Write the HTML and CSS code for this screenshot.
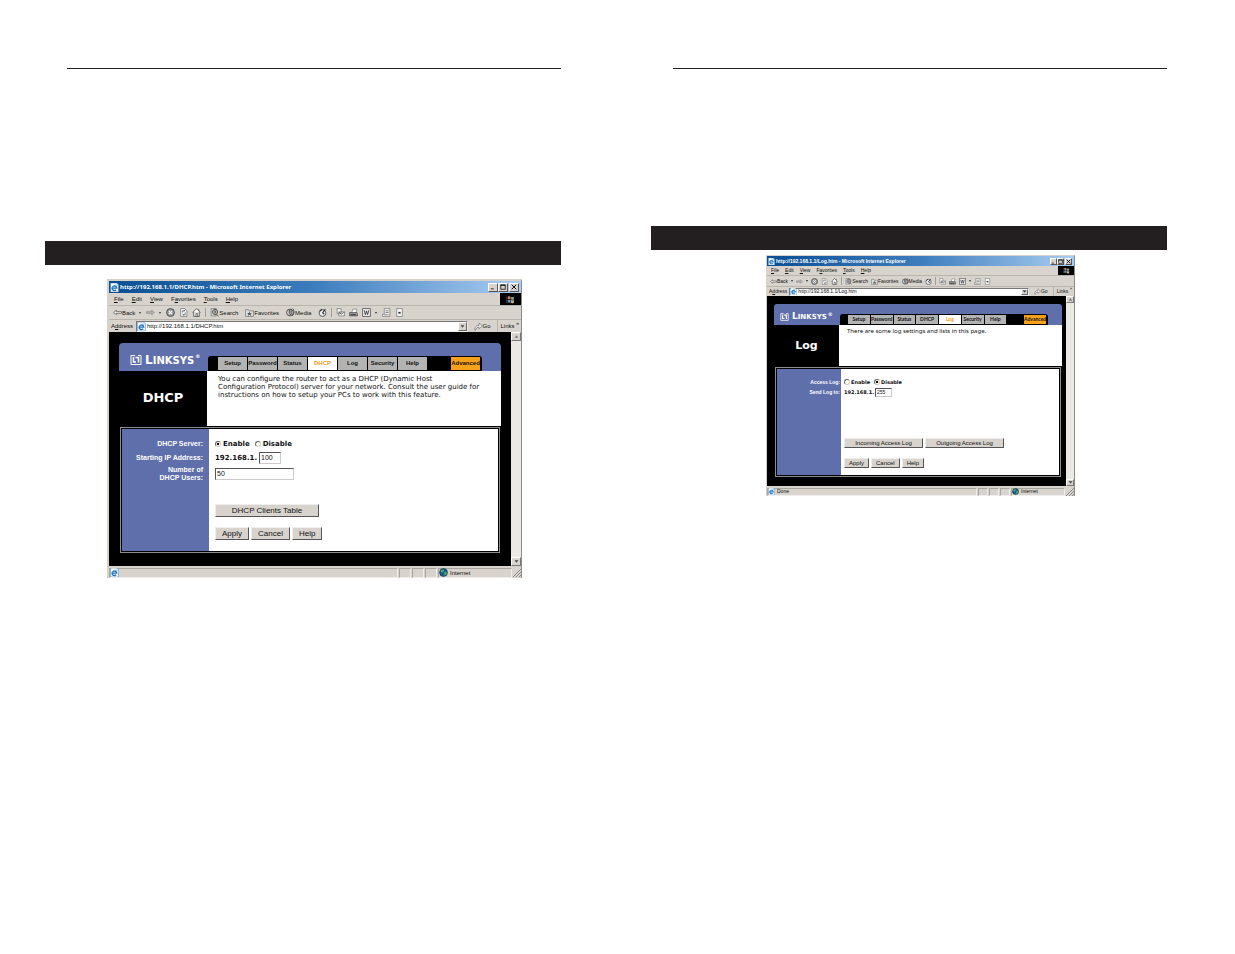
FILE: index.html
```
<!DOCTYPE html>
<html lang="en">
<head>
    <meta charset="UTF-8">
    <meta name="viewport" content="width=device-width, initial-scale=1.0">
    <title>Router Setup Guide</title>
    <link rel="stylesheet" href="styles.css">
</head>
<body>
    <!-- Shared icons -->
    <svg class="icon-defs" aria-hidden="true">
        <symbol id="i-ie" viewBox="0 0 16 16">
            <path d="M1 0h11l3 3v13H1z" fill="#fff" stroke="#4c82b8"/>
            <path d="M4 9h8a4 4 0 1 0-1 3" fill="none" stroke="#1b74c4" stroke-width="2.4"/>
            <path d="M2 12C4 5 9 3 14 4" fill="none" stroke="#4aa3e0" stroke-width="1.2"/>
        </symbol>
        <symbol id="i-back" viewBox="0 0 16 16">
            <path d="M1 8l5-4v2.500h9v3H6V12z" fill="#eee" stroke="#333"/>
        </symbol>
        <symbol id="i-forward" viewBox="0 0 16 16">
            <path d="M15 8l-5-4v2.500H1v3h9V12z" fill="#bbb" stroke="#777"/>
        </symbol>
        <symbol id="i-stop" viewBox="0 0 16 16">
            <circle cx="8" cy="8" r="7" fill="#999" stroke="#444" stroke-width="1.500"/>
            <path d="M5 5l6 6M11 5l-6 6" stroke="#fff" stroke-width="2"/>
        </symbol>
        <symbol id="i-refresh" viewBox="0 0 16 16">
            <path d="M3 1h7l4 4v10H3z" fill="#f5f5f5" stroke="#555"/>
            <path d="M6 8V5h4M8.500 3.500L10 5 8.500 6.500M11 8v4H7M8.500 10.500L7 12l1.500 1.500" fill="none" stroke="#333"/>
        </symbol>
        <symbol id="i-home" viewBox="0 0 16 16">
            <path d="M1 8l7-7 7 7M3 7v8h10V7" fill="#f5f5f5" stroke="#444" stroke-width="1.300"/>
            <path d="M7 15v-5h3v5M12 5V2" fill="none" stroke="#444" stroke-width="1.300"/>
        </symbol>
        <symbol id="i-search" viewBox="0 0 16 16">
            <path d="M2 1h9v13H2z" fill="#ddd" stroke="#555"/>
            <circle cx="9" cy="7" r="4.500" fill="#eee" stroke="#333" stroke-width="1.500"/>
            <path d="M6 7h6M9 3v8M12 11l3 4" stroke="#444" stroke-width="1.400"/>
        </symbol>
        <symbol id="i-favorites" viewBox="0 0 16 16">
            <path d="M1 3h5l1 2h8v10H1z" fill="#ddd" stroke="#555"/>
            <path d="M8 6l1 3h3l-2 2 1 3-3-2-3 2 1-3-2-2h3z" fill="#555"/>
        </symbol>
        <symbol id="i-media" viewBox="0 0 16 16">
            <circle cx="7" cy="8" r="6" fill="#ccc" stroke="#444" stroke-width="1.500"/>
            <path d="M6 3v7M9 2v9l-3 2M12 1c3 4 3 9-1 13" fill="none" stroke="#333" stroke-width="1.500"/>
        </symbol>
        <symbol id="i-history" viewBox="0 0 16 16">
            <circle cx="8" cy="9" r="6" fill="#eee" stroke="#444" stroke-width="1.500"/>
            <path d="M8 9l5-7M8 9l3 2M3 6l4-4" stroke="#333" stroke-width="2"/>
        </symbol>
        <symbol id="i-mail" viewBox="0 0 16 16">
            <path d="M2 1h7v9H2zM5 7h10v7H5z" fill="#f5f5f5" stroke="#555"/>
            <path d="M5 7l5 4 5-4" fill="none" stroke="#333"/>
        </symbol>
        <symbol id="i-print" viewBox="0 0 16 16">
            <path d="M5 8l2-6h7l-2 6" fill="#fff" stroke="#666"/>
            <path d="M1 8h13l1 2v4H1z" fill="#999" stroke="#333"/>
            <path d="M3 12h9" stroke="#222" stroke-width="1.500"/>
        </symbol>
        <symbol id="i-word" viewBox="0 0 16 16">
            <path d="M1 1h14v14H1z" fill="#eee" stroke="#555" stroke-width="1.500"/>
            <path d="M4 4l2 8 2-7 2 7 2-8" fill="none" stroke="#333" stroke-width="1.500"/>
        </symbol>
        <symbol id="i-page" viewBox="0 0 16 16">
            <path d="M4 1h10v14H1v-4h3z" fill="#f5f5f5" stroke="#555"/>
            <path d="M6 5h6M6 8h6M4 12h8" stroke="#333"/>
        </symbol>
        <symbol id="i-note" viewBox="0 0 16 16">
            <path d="M3 1h10v14H3z" fill="#f5f5f5" stroke="#555"/>
            <path d="M6 7h4v3H6z" fill="#333"/>
        </symbol>
        <symbol id="i-go" viewBox="0 0 16 16">
            <path d="M2 15c-2-5 2-9 7-9V2l6 5-6 5V9c-3 0-5 2-7 6z" fill="#eee" stroke="#555"/>
        </symbol>
        <symbol id="i-flag" viewBox="0 0 16 16">
            <path d="M3 3c2-1 3-1 5 0v5c-2-1-3-1-5 0z" fill="#c87e68"/>
            <path d="M9 3c2 1 3 1 5 0v5c-2 1-3 1-5 0z" fill="#7fa08a"/>
            <path d="M3 9c2-1 3-1 5 0v5c-2-1-3-1-5 0z" fill="#6d93c8"/>
            <path d="M9 9c2 1 3 1 5 0v5c-2 1-3 1-5 0z" fill="#c8b870"/>
            <path d="M0 4h2M0 7h2M0 10h2M0 13h2" stroke="#8a8a9a"/>
        </symbol>
        <symbol id="i-globe" viewBox="0 0 16 16">
            <circle cx="8" cy="8" r="7" fill="#1c5c8a" stroke="#123"/>
            <path d="M3 4l5-2 1 3-3 3-3-1zM9 8l4-2 1 4-4 4z" fill="#3fae6a"/>
        </symbol>
        <symbol id="i-min" viewBox="0 0 8 8"><path d="M1 6h4v1H1z"/></symbol>
        <symbol id="i-max" viewBox="0 0 8 8"><path d="M1 1h6v6H1zM1 2h6" fill="none" stroke="#000"/></symbol>
        <symbol id="i-close" viewBox="0 0 8 8"><path d="M1 1l6 6M7 1L1 7" stroke="#000" stroke-width="1.300"/></symbol>
        <symbol id="i-up" viewBox="0 0 8 8"><path d="M1 6l3-4 3 4z" fill="#777"/></symbol>
        <symbol id="i-down" viewBox="0 0 8 8"><path d="M1 2h6L4 6z" fill="#444"/></symbol>
        <symbol id="i-grip" viewBox="0 0 8 8"><path d="M0 8l8-8M3 8l5-5M6 8l2-2" stroke="#888"/></symbol>
        <symbol id="i-linksys" viewBox="0 0 24 20">
            <path d="M10 1H2v18h20V1h-6" fill="none" stroke="#fff" stroke-width="2"/>
            <path d="M7 4v10h5M11 5h6v10" fill="none" stroke="#fff" stroke-width="3"/>
        </symbol>
    </svg>

    <main class="spread">
        <!-- DHCP page -->
        <section class="sheet">
            <hr class="rule">
            <div class="heading-bar"></div>
            <div class="window">
                <div class="title-bar">
                    <svg class="icon"><use href="#i-ie"/></svg>
                    <span class="title-text">http://192.168.1.1/DHCP.htm - Microsoft Internet Explorer</span>
                    <button class="win-btn" aria-label="Minimize"><svg><use href="#i-min"/></svg></button>
                    <button class="win-btn" aria-label="Maximize"><svg><use href="#i-max"/></svg></button>
                    <button class="win-btn close" aria-label="Close"><svg><use href="#i-close"/></svg></button>
                </div>
                <div class="menu-bar">
                    <button><u>F</u>ile</button>
                    <button><u>E</u>dit</button>
                    <button><u>V</u>iew</button>
                    <button>F<u>a</u>vorites</button>
                    <button><u>T</u>ools</button>
                    <button><u>H</u>elp</button>
                    <span class="throbber"><svg class="icon"><use href="#i-flag"/></svg></span>
                </div>
                <div class="tool-bar">
                    <button><svg class="icon"><use href="#i-back"/></svg>Back</button>
                    <span class="caret"></span>
                    <button aria-label="Forward"><svg class="icon"><use href="#i-forward"/></svg></button>
                    <span class="caret"></span>
                    <button aria-label="Stop"><svg class="icon"><use href="#i-stop"/></svg></button>
                    <button aria-label="Refresh"><svg class="icon"><use href="#i-refresh"/></svg></button>
                    <button aria-label="Home"><svg class="icon"><use href="#i-home"/></svg></button>
                    <span class="divider"></span>
                    <button class="labelled"><svg class="icon"><use href="#i-search"/></svg>Search</button>
                    <button class="labelled"><svg class="icon"><use href="#i-favorites"/></svg>Favorites</button>
                    <button class="labelled"><svg class="icon"><use href="#i-media"/></svg>Media</button>
                    <button aria-label="History"><svg class="icon"><use href="#i-history"/></svg></button>
                    <span class="divider"></span>
                    <button aria-label="Mail"><svg class="icon"><use href="#i-mail"/></svg></button>
                    <button aria-label="Print"><svg class="icon"><use href="#i-print"/></svg></button>
                    <button aria-label="Edit"><svg class="icon"><use href="#i-word"/></svg></button>
                    <span class="caret"></span>
                    <button aria-label="Discuss"><svg class="icon"><use href="#i-page"/></svg></button>
                    <button aria-label="Messenger"><svg class="icon"><use href="#i-note"/></svg></button>
                </div>
                <div class="address-bar">
                    <label for="address-dhcp">A<u>d</u>dress</label>
                    <div class="address-box">
                        <svg class="icon"><use href="#i-ie"/></svg>
                        <input type="text" id="address-dhcp" value="http://192.168.1.1/DHCP.htm">
                        <button class="drop" aria-label="Show addresses"><svg><use href="#i-down"/></svg></button>
                    </div>
                    <button class="go"><svg class="icon"><use href="#i-go"/></svg>Go</button>
                    <span class="links">Links <sup>»</sup></span>
                </div>
                <div class="view">
                    <div class="router">
                        <header class="banner">
                            <div class="logo"><svg><use href="#i-linksys"/></svg><span><b>L</b>INKSYS</span><sup>®</sup></div>
                            <nav class="tabs">
                                <a href="#">Setup</a>
                                <a href="#">Password</a>
                                <a href="#">Status</a>
                                <a href="#" class="current">DHCP</a>
                                <a href="#">Log</a>
                                <a href="#">Security</a>
                                <a href="#">Help</a>
                                <a href="#" class="advanced">Advanced</a>
                            </nav>
                        </header>
                        <div class="intro">
                            <h1>DHCP</h1>
                            <p>You can configure the router to act as a DHCP (Dynamic Host<br>Configuration Protocol) server for your network. Consult the user guide for<br>instructions on how to setup your PCs to work with this feature.</p>
                        </div>
                        <form class="settings">
                            <span class="name">DHCP Server:</span>
                            <div class="value">
                                <input type="radio" name="dhcp" id="dhcp-on" checked><label for="dhcp-on">Enable</label>
                                <input type="radio" name="dhcp" id="dhcp-off"><label for="dhcp-off">Disable</label>
                            </div>
                            <label class="name" for="start-ip">Starting IP Address:</label>
                            <div class="value">192.168.1.<input type="text" class="octet" id="start-ip" value="100"></div>
                            <label class="name" for="users">Number of<br>DHCP Users:</label>
                            <div class="value"><input type="text" class="wide" id="users" value="50"></div>
                            <div class="actions">
                                <div class="row">
                                    <button type="button" class="long">DHCP Clients Table</button>
                                </div>
                                <div class="row">
                                    <button type="button">Apply</button>
                                    <button type="button">Cancel</button>
                                    <button type="button">Help</button>
                                </div>
                            </div>
                        </form>
                    </div>
                    <div class="scrollbar">
                        <button aria-label="Scroll up"><svg><use href="#i-up"/></svg></button>
                        <button aria-label="Scroll down"><svg><use href="#i-down"/></svg></button>
                    </div>
                </div>
                <div class="status-bar">
                    <span class="pane message"><svg class="icon"><use href="#i-ie"/></svg></span>
                    <span class="pane"></span>
                    <span class="pane"></span>
                    <span class="pane"></span>
                    <span class="pane zone"><svg class="icon"><use href="#i-globe"/></svg>Internet</span>
                    <svg class="grip"><use href="#i-grip"/></svg>
                </div>
            </div>
        </section>

        <!-- Log page -->
        <section class="sheet log">
            <hr class="rule">
            <div class="heading-bar"></div>
            <div class="window small">
                <div class="title-bar">
                    <svg class="icon"><use href="#i-ie"/></svg>
                    <span class="title-text">http://192.168.1.1/Log.htm - Microsoft Internet Explorer</span>
                    <button class="win-btn" aria-label="Minimize"><svg><use href="#i-min"/></svg></button>
                    <button class="win-btn" aria-label="Maximize"><svg><use href="#i-max"/></svg></button>
                    <button class="win-btn close" aria-label="Close"><svg><use href="#i-close"/></svg></button>
                </div>
                <div class="menu-bar">
                    <button><u>F</u>ile</button>
                    <button><u>E</u>dit</button>
                    <button><u>V</u>iew</button>
                    <button>F<u>a</u>vorites</button>
                    <button><u>T</u>ools</button>
                    <button><u>H</u>elp</button>
                    <span class="throbber"><svg class="icon"><use href="#i-flag"/></svg></span>
                </div>
                <div class="tool-bar">
                    <button><svg class="icon"><use href="#i-back"/></svg>Back</button>
                    <span class="caret"></span>
                    <button aria-label="Forward"><svg class="icon"><use href="#i-forward"/></svg></button>
                    <span class="caret"></span>
                    <button aria-label="Stop"><svg class="icon"><use href="#i-stop"/></svg></button>
                    <button aria-label="Refresh"><svg class="icon"><use href="#i-refresh"/></svg></button>
                    <button aria-label="Home"><svg class="icon"><use href="#i-home"/></svg></button>
                    <span class="divider"></span>
                    <button class="labelled"><svg class="icon"><use href="#i-search"/></svg>Search</button>
                    <button class="labelled"><svg class="icon"><use href="#i-favorites"/></svg>Favorites</button>
                    <button class="labelled"><svg class="icon"><use href="#i-media"/></svg>Media</button>
                    <button aria-label="History"><svg class="icon"><use href="#i-history"/></svg></button>
                    <span class="divider"></span>
                    <button aria-label="Mail"><svg class="icon"><use href="#i-mail"/></svg></button>
                    <button aria-label="Print"><svg class="icon"><use href="#i-print"/></svg></button>
                    <button aria-label="Edit"><svg class="icon"><use href="#i-word"/></svg></button>
                    <span class="caret"></span>
                    <button aria-label="Discuss"><svg class="icon"><use href="#i-page"/></svg></button>
                    <button aria-label="Messenger"><svg class="icon"><use href="#i-note"/></svg></button>
                </div>
                <div class="address-bar">
                    <label for="address-log">A<u>d</u>dress</label>
                    <div class="address-box">
                        <svg class="icon"><use href="#i-ie"/></svg>
                        <input type="text" id="address-log" value="http://192.168.1.1/Log.htm">
                        <button class="drop" aria-label="Show addresses"><svg><use href="#i-down"/></svg></button>
                    </div>
                    <button class="go"><svg class="icon"><use href="#i-go"/></svg>Go</button>
                    <span class="links">Links <sup>»</sup></span>
                </div>
                <div class="view">
                    <div class="router">
                        <header class="banner">
                            <div class="logo"><svg><use href="#i-linksys"/></svg><span><b>L</b>INKSYS</span><sup>®</sup></div>
                            <nav class="tabs">
                                <a href="#">Setup</a>
                                <a href="#">Password</a>
                                <a href="#">Status</a>
                                <a href="#">DHCP</a>
                                <a href="#" class="current">Log</a>
                                <a href="#">Security</a>
                                <a href="#">Help</a>
                                <a href="#" class="advanced">Advanced</a>
                            </nav>
                        </header>
                        <div class="intro">
                            <h1>Log</h1>
                            <p>There are some log settings and lists in this page.</p>
                        </div>
                        <form class="settings">
                            <span class="name">Access Log:</span>
                            <div class="value">
                                <input type="radio" name="log" id="log-on"><label for="log-on">Enable</label>
                                <input type="radio" name="log" id="log-off" checked><label for="log-off">Disable</label>
                            </div>
                            <label class="name" for="send-log">Send Log to:</label>
                            <div class="value">192.168.1.<input type="text" class="octet" id="send-log" value="255"></div>
                            <div class="actions">
                                <div class="row">
                                    <button type="button" class="long">Incoming Access Log</button>
                                    <button type="button" class="long">Outgoing Access Log</button>
                                </div>
                                <div class="row">
                                    <button type="button">Apply</button>
                                    <button type="button">Cancel</button>
                                    <button type="button">Help</button>
                                </div>
                            </div>
                        </form>
                    </div>
                    <div class="scrollbar">
                        <button aria-label="Scroll up"><svg><use href="#i-up"/></svg></button>
                        <button aria-label="Scroll down"><svg><use href="#i-down"/></svg></button>
                    </div>
                </div>
                <div class="status-bar">
                    <span class="pane message"><svg class="icon"><use href="#i-ie"/></svg>Done</span>
                    <span class="pane"></span>
                    <span class="pane"></span>
                    <span class="pane"></span>
                    <span class="pane zone"><svg class="icon"><use href="#i-globe"/></svg>Internet</span>
                    <svg class="grip"><use href="#i-grip"/></svg>
                </div>
            </div>
        </section>
    </main>
</body>
</html>
```

FILE: styles.css
```
* {
    box-sizing: border-box;
}

body {
    margin: 0;
    background-color: #fff;
    color: #111;
    font-family: "Liberation Sans", Arial, sans-serif;
}

button,
input {
    margin: 0;
    padding: 0;
    border: none;
    border-radius: 0;
    background: none;
    color: inherit;
    font: inherit;
}

svg {
    display: block;
    flex: none;
}

.icon-defs {
    position: absolute;
    width: 0;
    height: 0;
}

/* Printed spread */
.spread {
    display: grid;
    grid-template-columns: 1fr 1fr;
    gap: 90px;
    padding: 68px 68px 0 45px;
}

.rule {
    height: 1px;
    margin: 0 0 172px 22px;
    border: none;
    background-color: #231f20;
}

.log .rule {
    margin-bottom: 157px;
}

.heading-bar {
    height: 24px;
    background-color: #231f20;
}

/* Browser window */
.window {
    --icon: 9px;
    --row: 12px;
    margin: 14px 39px 0 62px;
    border: 2px solid #d6d2ca;
    border-right-color: #8c8a86;
    border-right-width: 1px;
    border-bottom: none;
    background-color: #d8d4cd;
    font-size: 6px;
    line-height: var(--row);
}

.window.small {
    --icon: 7px;
    --row: 9px;
    margin: 5px 92px 0 115px;
    border-width: 1px;
    border-bottom: none;
    font-size: 5px;
}

.icon {
    width: var(--icon);
    height: var(--icon);
}

.title-bar {
    display: flex;
    align-items: center;
    height: 12px;
    padding: 0 2px 0 1px;
    background-image: linear-gradient(to right, #0a4f94, #3d7dbd 50%, #a9cdf2);
    color: #fff;
    font-weight: bold;
}

.small .title-bar {
    height: 10px;
}

.title-text {
    flex: 1;
    padding-left: 1px;
    font-family: "Noto Sans", sans-serif;
    white-space: nowrap;
}

.small .title-text {
    font-family: "Liberation Sans", Arial, sans-serif;
}

.win-btn {
    display: flex;
    align-items: center;
    justify-content: center;
    width: 10px;
    height: 9px;
    border: 1px solid;
    border-color: #fff #555 #555 #fff;
    background-color: #d8d4cd;
}

.win-btn.close {
    margin-left: 1px;
}

.win-btn svg {
    width: 6px;
    height: 6px;
}

.small .win-btn {
    width: 7px;
    height: 7px;
}

.small .win-btn svg {
    width: 5px;
    height: 5px;
}

.menu-bar {
    display: flex;
    gap: 8px;
    height: 12px;
    padding-left: 5px;
}

.small .menu-bar {
    gap: 6px;
    height: 9px;
    padding-left: 4px;
}

.throbber {
    display: flex;
    align-items: center;
    justify-content: center;
    width: 21px;
    margin-left: auto;
    background-color: #000;
}

.small .throbber {
    width: 16px;
}

.tool-bar {
    display: flex;
    align-items: center;
    gap: 4px;
    height: 14px;
    padding-left: 4px;
    border-top: 1px solid #b8b4ae;
}

.small .tool-bar {
    gap: 3px;
    height: 11px;
    padding-left: 3px;
}

.tool-bar button,
.go {
    display: flex;
    align-items: center;
}

.labelled {
    margin-right: 3px;
}

.small .labelled {
    margin-right: 0;
}

.caret {
    margin: 0 1px 0 0;
    border: 1px solid transparent;
    border-top: 2px solid #333;
    border-bottom: none;
}

.small .caret {
    margin: 0;
}

.divider {
    width: 1px;
    height: 75%;
    background-color: #a09c96;
}

.address-bar {
    display: flex;
    align-items: center;
    gap: 3px;
    height: 13px;
    padding: 0 2px;
    border-top: 1px solid #b8b4ae;
}

.small .address-bar {
    gap: 2px;
    height: 10px;
}

.address-box {
    display: flex;
    flex: 1;
    align-items: center;
    height: 11px;
    border: 1px solid;
    border-color: #777 #eee #eee #777;
    background-color: #fff;
}

.small .address-box {
    height: 8px;
}

.address-box input {
    flex: 1;
    min-width: 0;
    padding-left: 1px;
}

.drop {
    display: flex;
    align-items: center;
    justify-content: center;
    width: 9px;
    height: 100%;
    border: 1px solid;
    border-color: #fff #666 #666 #fff;
    background-color: #d8d4cd;
}

.small .drop {
    width: 7px;
}

.drop svg {
    width: 5px;
    height: 5px;
}

.go {
    margin-left: 3px;
}

.links {
    margin-left: 3px;
    padding-left: 3px;
    border-left: 1px solid #b8b4ae;
    white-space: nowrap;
}

.links sup {
    line-height: 1px;
}

/* Page area with scrollbar */
.view {
    display: flex;
    background-color: #000;
}

.router {
    flex: 1;
    padding: 11px 10px 12px;
}

.small .router {
    padding: 8px 4px 8px 7px;
}

.scrollbar {
    display: flex;
    flex-direction: column;
    justify-content: space-between;
    width: 10px;
    background-color: #ebe9e4;
}

.small .scrollbar {
    width: 8px;
}

.scrollbar button {
    display: flex;
    align-items: center;
    justify-content: center;
    height: 9px;
    border: 1px solid;
    border-color: #fff #777 #777 #fff;
    background-color: #d8d4cd;
}

.small .scrollbar button {
    height: 7px;
}

.scrollbar svg {
    width: 5px;
    height: 5px;
}

/* Router banner */
.banner {
    display: flex;
    align-items: flex-end;
    height: 28px;
    padding-right: 19px;
    border-radius: 4px 4px 0 0;
    background-color: #5f6fac;
}

.small .banner {
    height: 21px;
    padding-right: 14px;
    border-radius: 3px 3px 0 0;
}

.logo {
    display: flex;
    align-items: center;
    gap: 3px;
    width: 89px;
    height: 22px;
    padding-left: 11px;
    color: #fff;
    font-family: "DejaVu Sans", Verdana, sans-serif;
    font-size: 10px;
    font-weight: bold;
}

.logo b {
    font-size: 12px;
}

.logo svg {
    width: 12px;
    height: 10px;
}

.logo sup {
    align-self: flex-start;
    margin: 4px 0 0 -2px;
    font-size: 5px;
    line-height: 6px;
}

.small .logo {
    width: 66px;
    height: 16px;
    padding-left: 6px;
    font-size: 7px;
}

.small .logo b {
    font-size: 9px;
}

.small .logo svg {
    width: 9px;
    height: 8px;
}

.small .logo sup {
    margin-top: 2px;
}

.tabs {
    display: flex;
    flex: 1;
    gap: 1px;
    height: 15px;
    padding: 1px 2px 1px 10px;
    border-radius: 3px 3px 0 0;
    background-color: #000;
}

.small .tabs {
    height: 11px;
    padding: 1px 2px 1px 8px;
}

.tabs a {
    display: flex;
    flex: 1;
    justify-content: center;
    min-width: 0;
    background-color: #b3b3b3;
    color: #111;
    font-weight: bold;
    line-height: 13px;
    text-decoration: none;
}

.small .tabs a {
    font-family: Lato, sans-serif;
    line-height: 9px;
}

.tabs a.current {
    background-color: #fff;
    color: #f29a1a;
}

.tabs a.advanced {
    margin-left: 23px;
    background-color: #f7a11a;
}

.small .tabs a.advanced {
    margin-left: 17px;
}

.intro {
    display: flex;
    height: 55px;
    background-color: #fff;
}

.intro h1 {
    width: 88px;
    margin: 0;
    background-color: #000;
    color: #fff;
    font-family: "DejaVu Sans", Verdana, sans-serif;
    font-size: 13px;
    line-height: 54px;
    text-align: center;
}

.intro p {
    margin: 0;
    padding: 4px 0 0 11px;
    font-family: "DejaVu Sans", Verdana, sans-serif;
    font-size: 7px;
    line-height: 8px;
    white-space: nowrap;
}

.small .intro {
    height: 41px;
}

.small .intro h1 {
    width: 65px;
    font-size: 11px;
    line-height: 41px;
}

.small .intro p {
    padding: 2px 0 0 8px;
    font-family: "Noto Sans", sans-serif;
    font-size: 6px;
}

/* Settings form */
.settings {
    display: grid;
    grid-template-columns: 86px 1fr;
    grid-template-rows: 14px 14px 18px 1fr;
    column-gap: 7px;
    height: 128px;
    padding-top: 8px;
    border: 3px solid #000;
    outline: 1px solid #8c8c8c;
    outline-offset: -2px;
    background: linear-gradient(to right, #5f6fac 87px, #fff 87px) padding-box;
    font-family: "DejaVu Sans", Verdana, sans-serif;
    font-size: 7px;
    font-weight: bold;
}

.small .settings {
    grid-template-columns: 64px 1fr;
    grid-template-rows: 10px 10px 1fr;
    column-gap: 3px;
    height: 112px;
    background: linear-gradient(to right, #5f6fac 64px, #fff 64px) padding-box;
    font-size: 5px;
}

.name {
    padding-right: 5px;
    color: #fff;
    font-family: "Liberation Sans", Arial, sans-serif;
    line-height: 14px;
    text-align: right;
}

.name:has(br) {
    padding-top: 1px;
    line-height: 8px;
}

.small .name {
    padding-right: 1px;
    line-height: 10px;
}

.value {
    display: flex;
    align-items: center;
    gap: 2px;
}

.small .value {
    gap: 1px;
}

.value label + input {
    margin-left: 3px;
}

input[type="radio"] {
    appearance: none;
    width: 6px;
    height: 6px;
    border: 1px solid;
    border-color: #666 #ccc #ccc #666;
    border-radius: 50%;
    background-color: #fff;
}

input[type="radio"]:checked {
    background-image: radial-gradient(#000 30%, transparent 40%);
}

.value input[type="text"] {
    height: 12px;
    padding-left: 1px;
    border: 1px solid;
    border-color: #555 #ccc #ccc #555;
    background-color: #fff;
    font-family: "Liberation Sans", Arial, sans-serif;
    font-weight: normal;
}

.value .octet {
    width: 22px;
}

.value .wide {
    width: 79px;
}

.small .value input[type="text"] {
    height: 9px;
}

.small .value .octet {
    width: 17px;
}

.actions {
    display: flex;
    grid-column: 2;
    flex-direction: column;
    justify-content: flex-end;
    gap: 10px;
    padding-bottom: 11px;
}

.small .actions {
    padding-bottom: 7px;
}

.row {
    display: flex;
    gap: 2px;
}

.actions button {
    height: 13px;
    padding: 0 6px;
    border: 1px solid;
    border-color: #eee #555 #555 #eee;
    background-color: #d8d4cd;
    font-family: "Liberation Sans", Arial, sans-serif;
    font-size: 8px;
    font-weight: normal;
    line-height: 11px;
}

.actions .long {
    width: 104px;
}

.small .actions button {
    height: 10px;
    padding: 0 4px;
    font-size: 6px;
    line-height: 8px;
}

.small .actions .long {
    width: 79px;
}

/* Status bar */
.status-bar {
    display: flex;
    align-items: center;
    gap: 1px;
    height: 12px;
    padding-top: 1px;
}

.small .status-bar {
    height: 10px;
}

.pane {
    display: flex;
    align-items: center;
    gap: 2px;
    width: 12px;
    height: 10px;
    border: 1px solid;
    border-color: #a8a49e #eee #eee #a8a49e;
}

.pane.message {
    flex: 1;
}

.pane.zone {
    width: 74px;
}

.small .pane {
    width: 10px;
    height: 8px;
}

.small .pane.message {
    width: auto;
}

.small .pane.zone {
    width: 54px;
}

.grip {
    width: 8px;
    height: 8px;
}
```
